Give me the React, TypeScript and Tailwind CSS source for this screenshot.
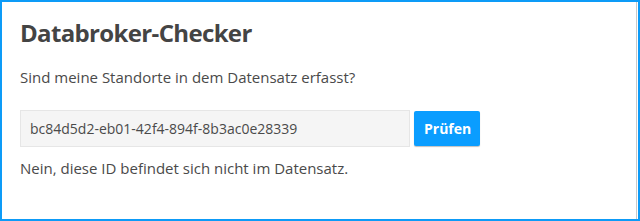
import React from 'react';

export default function App() {
  return (
    <div className="w-[640px] h-[221px] bg-white border-2 border-[#0d9bf7] overflow-hidden font-['Open_Sans',sans-serif] text-[#4a4a4a]">
      <div className="h-full border-r border-[#c9c9c9] mr-[1px] px-[18px] pt-[14px]">
        <h1 className="text-[24px] leading-[34px] font-bold text-[#444444] tracking-[-0.65px]">Databroker-Checker</h1>
        <p className="mt-[16px] text-[15px] leading-[22px]">Sind meine Standorte in dem Datensatz erfasst?</p>
        <div className="mt-[22px] flex items-center gap-[4px]">
          <input
            readOnly
            value="bc84d5d2-eb01-42f4-894f-8b3ac0e28339"
            className="w-[390px] h-[37px] px-[9px] bg-[#f5f5f5] border border-[#e6e6e6] text-[14px] text-[#4a4a4a] outline-none"
          />
          <button className="h-[35px] pl-[10px] pr-[9px] bg-[#0a9dff] text-white font-bold text-[14px] rounded-[2px] shadow-[0_1px_1px_rgba(0,0,0,0.25)]">
            Prüfen
          </button>
        </div>
        <p className="mt-[10px] text-[15px] leading-[22px]">Nein, diese ID befindet sich nicht im Datensatz.</p>
      </div>
    </div>
  );
}
